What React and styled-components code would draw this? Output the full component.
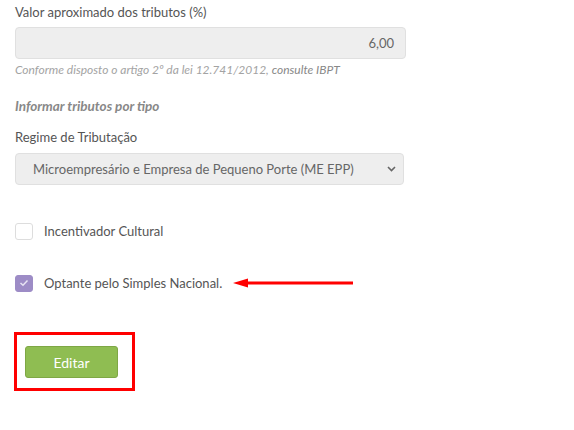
import React from 'react'
import styled, { createGlobalStyle } from 'styled-components'

const Global = createGlobalStyle`
  body {
    margin: 0;
    background: #fff;
    font-family: Lato, "Open Sans", sans-serif;
    color: #555;
  }
`

const Page = styled.div`
  width: 574px;
  height: 430px;
  padding: 2px 0 0 15px;
  box-sizing: border-box;
`

const Label = styled.div`
  font-size: 13px;
  line-height: 20px;
  color: #555;
  margin-bottom: ${p => p.gap || 5}px;
`

const Field = styled.div`
  height: 32px;
  box-sizing: border-box;
  background: #eee;
  border: 1px solid #e0e0e0;
  border-radius: 4px;
  display: flex;
  align-items: center;
  font-size: 13px;
  color: #666;
  justify-content: ${p => (p.right ? 'flex-end' : 'space-between')};
  padding: ${p => (p.right ? '0 11px 0 0' : '0 7px 0 17px')};
  width: ${p => p.w || 391}px;
`

const Help = styled.div`
  font-size: 12px;
  font-style: italic;
  color: #a3a3a3;
  line-height: 16px;
  margin-top: 3px;
  b {
    font-weight: 400;
    color: #888;
  }
`

const Section = styled.div`
  font-size: 13.5px;
  font-style: italic;
  font-weight: 700;
  color: #888;
  line-height: 16px;
  margin: 20px 0 13px;
`

const CheckRow = styled.div`
  display: flex;
  align-items: center;
  height: 18px;
  margin-top: ${p => p.top}px;
  font-size: 13px;
  color: #555;
`

const Box = styled.div`
  width: 18px;
  height: 17px;
  box-sizing: border-box;
  border-radius: 3px;
  border: 1px solid ${p => (p.checked ? '#9d8cc6' : '#ddd')};
  background: ${p => (p.checked ? '#9d8cc6' : '#fff')};
  margin-right: 11px;
  display: flex;
  align-items: center;
  justify-content: center;
`

const Arrow = styled.svg`
  margin-left: 11px;
  display: block;
`

const Highlight = styled.div`
  display: inline-block;
  margin: 40px 0 0 -1px;
  border: 3px solid #f00;
  padding: 11px 14px 10px 8px;
`

const Button = styled.button`
  width: 93px;
  height: 32px;
  background: #8fbd52;
  border: 1px solid #7ea745;
  border-radius: 3px;
  color: #fff;
  font-family: Lato, sans-serif;
  font-size: 14px;
  display: block;
  padding: 0;
`

const App = () => (
  <Page>
    <Global />
    <Label>Valor aproximado dos tributos (%)</Label>
    <Field right>6,00</Field>
    <Help>Conforme disposto o artigo 2º da lei 12.741/2012, <b>consulte IBPT</b></Help>
    <Section>Informar tributos por tipo</Section>
    <Label gap={6}>Regime de Tributação</Label>
    <Field w={389}>
      <span>Microempresário e Empresa de Pequeno Porte (ME EPP)</span>
      <svg width="9" height="6" viewBox="0 0 9 6">
        <path d="M1 1 L4.5 4.5 L8 1" stroke="#666" strokeWidth="1.6" fill="none" />
      </svg>
    </Field>
    <CheckRow top={37}>
      <Box />
      Incentivador Cultural
    </CheckRow>
    <CheckRow top={34}>
      <Box checked>
        <svg width="10" height="8" viewBox="0 0 10 8">
          <path d="M1.5 4 L4 6.3 L8.5 1.5" stroke="#e8e4f3" strokeWidth="1.5" fill="none" />
        </svg>
      </Box>
      Optante pelo Simples Nacional.
      <Arrow width="121" height="10" viewBox="0 0 121 10">
        <path d="M0 5 L15 0.5 L15 9.5 Z" fill="#f00" />
        <rect x="13" y="3.5" width="107" height="3" fill="#f00" />
      </Arrow>
    </CheckRow>
    <Highlight>
      <Button>Editar</Button>
    </Highlight>
  </Page>
)

export default App
